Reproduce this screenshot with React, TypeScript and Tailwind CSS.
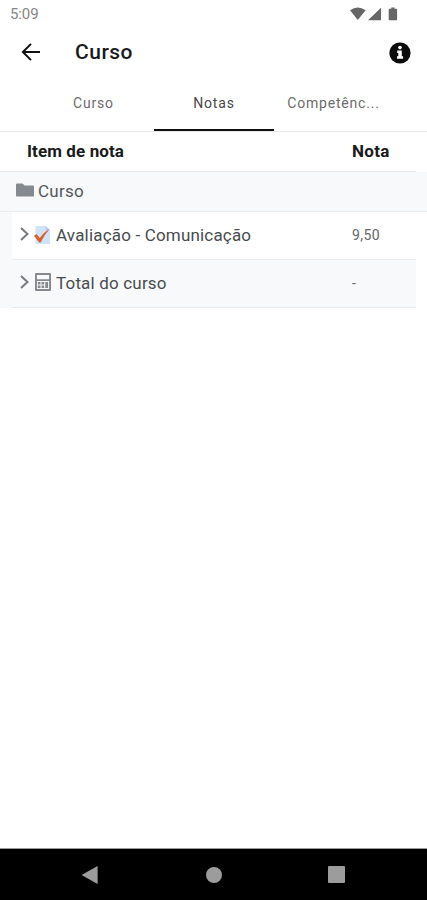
type GradeItem = { name: string; grade: string; kind: 'quiz' | 'total' };

const TABS = [
  { label: 'Curso', active: false },
  { label: 'Notas', active: true },
  { label: 'Competênc...', active: false },
];

const ITEMS: GradeItem[] = [
  { name: 'Avaliação - Comunicação', grade: '9,50', kind: 'quiz' },
  { name: 'Total do curso', grade: '-', kind: 'total' },
];

function StatusBar() {
  return (
    <div className="flex h-7 items-center justify-between pl-[10px] pr-[29px] text-[#858585]">
      <span className="text-[15px] leading-7 tracking-[-0.1px]">5:09</span>
      <svg width="48" height="14" viewBox="0 0 48 14" className="-mt-px fill-[#666]" aria-hidden>
        <path d="M0 3.2Q7.8-2.2 15.6 3.2L7.8 13Z" />
        <path d="M18 13.3 31 .8V13.3Z" />
        <path d="M38.7 2.6q0-.8.8-.8h1.8V.4h3.2v1.4h1.8q.8 0 .8.8v10q0 .7-.8.7h-6.8q-.8 0-.8-.7Z" />
      </svg>
    </div>
  );
}

function Header() {
  return (
    <header className="flex h-12 items-center pl-[21px] pr-4">
      <svg width="20" height="18" viewBox="0 0 20 18" fill="none" stroke="#111" strokeWidth="2" aria-label="Voltar">
        <path d="M10 .9 1.9 9l8.1 8.1M2 9h17" />
      </svg>
      <h1 className="ml-[34px] flex-1 pt-0.5 text-[21px] font-medium tracking-[0.5px] text-[#1a1a1a]">Curso</h1>
      <svg width="22" height="22" viewBox="0 0 22 22" className="mt-px" aria-label="Informações">
        <circle cx="11" cy="11" r="10.6" fill="#0b0b0b" />
        <circle cx="11" cy="5.6" r="1.8" fill="#fff" />
        <path d="M8.2 8.6h4.6v5.7h1.3v2.5H8v-2.5h1.3v-3.2H8.2Z" fill="#fff" />
      </svg>
    </header>
  );
}

function Tabs() {
  return (
    <nav className="flex h-14 justify-center border-b border-[#e8e8e8] pl-px">
      {TABS.map(tab => (
        <div
          key={tab.label}
          className={
            tab.active
              ? 'flex w-[120px] items-center justify-center border-b-2 border-[#0f1112] pt-0.5 text-[#484848]'
              : 'flex w-[120px] items-center justify-center border-b-2 border-transparent pt-0.5 pr-px text-[#6c6c6c]'
          }
        >
          <span className="text-[14px] tracking-[0.8px]">{tab.label}</span>
        </div>
      ))}
    </nav>
  );
}

function Chevron() {
  return (
    <svg width="10" height="14" viewBox="0 0 10 14" fill="none" stroke="#777b7f" strokeWidth="2" className="-mt-[3px]" aria-hidden>
      <path d="m1 1 6.5 6L1 13" />
    </svg>
  );
}

function QuizIcon() {
  return (
    <svg width="17" height="20" viewBox="0 0 17 20" className="-mt-px" aria-hidden>
      <path d="M1.5 1h10l4.5 4v14H1.5Z" fill="#cfe3fa" />
      <path d="M11.5 1v4H16Z" fill="#b3d0f2" />
      <path d="M0 10.8 2.5 9l3.3 4.1Q9.8 7 15.4 4.2 10.6 9.4 6.6 17.4H5.2Z" fill="#dc6129" />
    </svg>
  );
}

function CalculatorIcon() {
  return (
    <svg width="16" height="18" viewBox="0 0 16 18" className="-mt-1 fill-[#85898d]" aria-hidden>
      <path
        fillRule="evenodd"
        d="M1 0h14q1 0 1 1v16q0 1-1 1H1q-1 0-1-1V1q0-1 1-1ZM1.9 1.9v4.4h12.2V1.9ZM1.9 7.9v8.2h12.2V7.9Z"
      />
      <path d="M2.8 8.9h2.7v2.6H2.8ZM6.5 8.9h2.7v2.6H6.5ZM2.8 12.6h2.7v2.5H2.8ZM6.5 12.6h2.7v2.5H6.5ZM10.3 8.9h2.8v6.2h-2.8Z" />
    </svg>
  );
}

function GradeRow({ item }: { item: GradeItem }) {
  const total = item.kind === 'total';
  return (
    <div
      className={
        total
          ? 'flex h-12 items-center border-b border-[#e9ecee] bg-[#f8f9fb]'
          : 'flex h-12 items-center border-b border-[#e9ecee] bg-white'
      }
    >
      <div className="flex w-[340px] items-center pl-2">
        <Chevron />
        <span className="ml-1 flex w-[17px] justify-center">{total ? <CalculatorIcon /> : <QuizIcon />}</span>
        <span className="ml-[5px] pt-px text-[17px] tracking-[0.18px] text-[#494c4f]">{item.name}</span>
      </div>
      <span className="text-[14px] tracking-[0.4px] text-[#666]">{item.grade}</span>
    </div>
  );
}

function GradesTable() {
  return (
    <section>
      <div className="mr-[11px] flex h-10 items-center border-b border-[#e6e9ea] pl-[27px] text-[17px] font-bold text-[#1a1a1a]">
        <span className="w-[325px] tracking-[0.1px]">Item de nota</span>
        <span className="tracking-[0.3px]">Nota</span>
      </div>
      <div className="flex h-10 items-center border-b border-[#e9ecee] bg-[#f8f9fb] pl-4">
        <svg width="18" height="14" viewBox="0 0 18 14" className="-mt-1 fill-[#858a90]" aria-hidden>
          <path d="M0 1.6Q0 .4 1.2.4h5.4l2 2h8.2q1.2 0 1.2 1.2v8.8q0 1.2-1.2 1.2H1.2Q0 13.6 0 12.4Z" />
        </svg>
        <span className="ml-1 pt-px text-[17px] tracking-[0.25px] text-[#54575a]">Curso</span>
      </div>
      <div className="mr-[11px] bg-[#f8f9fb] pl-3">
        {ITEMS.map(item => (
          <GradeRow key={item.name} item={item} />
        ))}
      </div>
    </section>
  );
}

function NavigationBar() {
  return (
    <footer className="flex h-[52px] items-center border-t border-[#999] bg-black pl-[81px]">
      <svg width="17" height="18" viewBox="0 0 17 18" className="fill-[#9c9c9c]" aria-label="Voltar">
        <path d="M.6 9 16.6 0v18Z" />
      </svg>
      <span className="ml-[108px] size-4 rounded-full bg-[#9c9c9c]" />
      <span className="ml-[106px] size-[17px] rounded-[1px] bg-[#9c9c9c]" />
    </footer>
  );
}

export default function App() {
  return (
    <div className="flex h-[900px] w-[427px] flex-col overflow-hidden bg-white font-[Roboto,sans-serif]">
      <StatusBar />
      <Header />
      <Tabs />
      <main className="flex-1">
        <GradesTable />
      </main>
      <NavigationBar />
    </div>
  );
}
